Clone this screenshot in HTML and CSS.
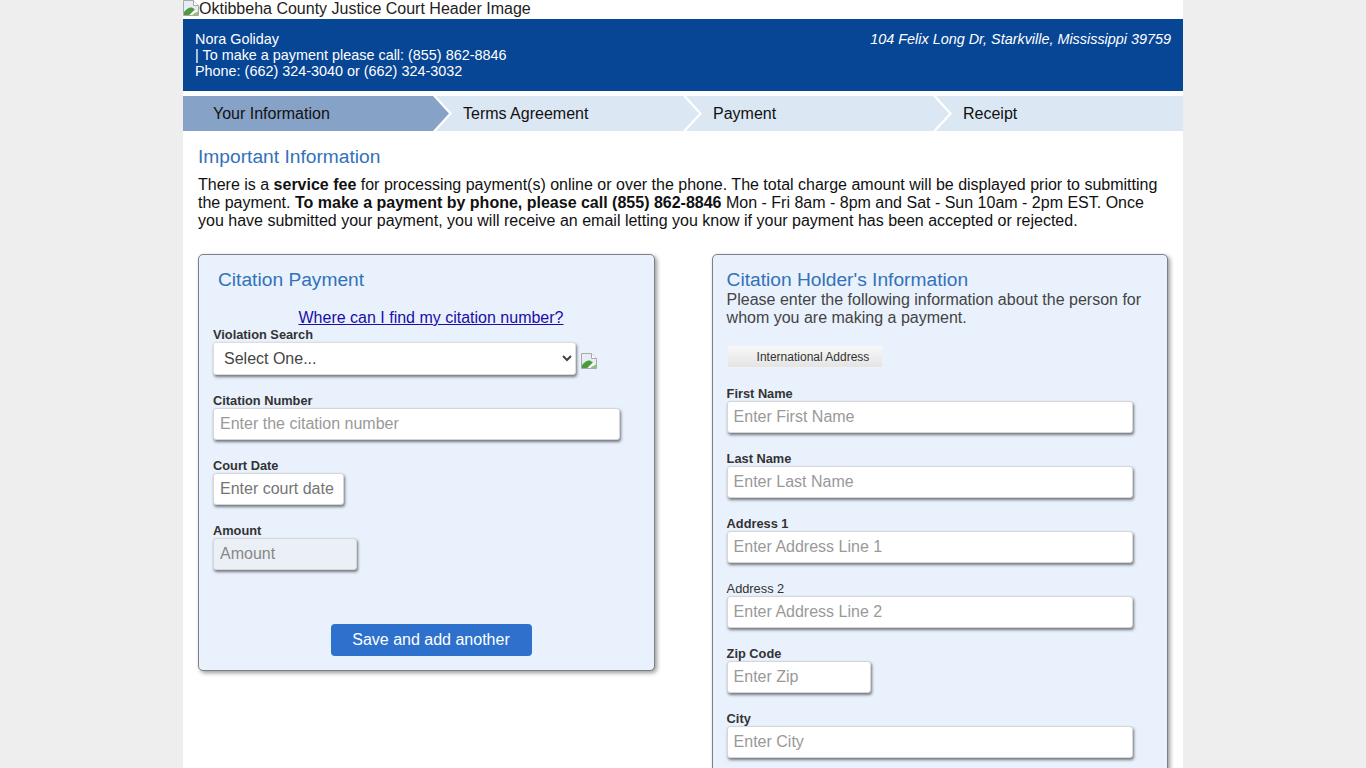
FILE: index.html
```html
<!DOCTYPE html>
<html lang="en">
<head>
<meta charset="utf-8">
<title>Oktibbeha County Justice Court</title>
<link rel="stylesheet" href="styles.css">
</head>
<body>
<div class="page">
  <div class="banner"><svg class="broken" viewBox="0 0 16 16"><path d="M.5 .5H10.5L15.5 5.5V15.5H.5Z" fill="#e6edf6" stroke="#a9a9a9"/><path d="M10.5 .5V5.5H15.5" fill="#fff" stroke="#a9a9a9"/><path d="M1 15V12C3.5 9 6 7 9 7.5L12 9.5 6.5 15Z" fill="#4f9a3f"/><path d="M6.5 15L12 9.5 15 11V15Z" fill="#f4f7f2"/><path d="M11 13.5L15 11.5V15H9.5Z" fill="#8fc07f"/></svg>Oktibbeha County Justice Court Header Image</div>
  <header class="court">
    <div>Nora Goliday<br>| To make a payment please call: (855) 862-8846<br>Phone: (662) 324-3040 or (662) 324-3032</div>
    <div class="address">104 Felix Long Dr, Starkville, Mississippi 39759</div>
  </header>
  <nav class="steps">
    <div class="step active">Your Information</div>
    <div class="step">Terms Agreement</div>
    <div class="step">Payment</div>
    <div class="step last">Receipt</div>
  </nav>
  <main class="content">
    <h2 class="intro-title">Important Information</h2>
    <p class="intro">There is a <b>service fee</b> for processing payment(s) online or over the phone. The total charge amount will be displayed prior to submitting the payment. <b>To make a payment by phone, please call (855) 862-8846</b> Mon - Fri 8am - 8pm and Sat - Sun 10am - 2pm EST. Once you have submitted your payment, you will receive an email letting you know if your payment has been accepted or rejected.</p>
    <div class="columns">
      <section class="panel left">
        <h2 class="panel-title indented">Citation Payment</h2>
        <a class="help" href="#">Where can I find my citation number?</a>
        <label class="field first">Violation Search</label>
        <div class="select-row">
          <select class="select"><option>Select One...</option></select>
          <svg class="broken small" viewBox="0 0 16 16"><path d="M.5 .5H10.5L15.5 5.5V15.5H.5Z" fill="#e6edf6" stroke="#a9a9a9"/><path d="M10.5 .5V5.5H15.5" fill="#fff" stroke="#a9a9a9"/><path d="M1 15V12C3.5 9 6 7 9 7.5L12 9.5 6.5 15Z" fill="#4f9a3f"/><path d="M6.5 15L12 9.5 15 11V15Z" fill="#f4f7f2"/><path d="M11 13.5L15 11.5V15H9.5Z" fill="#8fc07f"/></svg>
        </div>
        <label class="field">Citation Number</label>
        <input class="input w-citation" placeholder="Enter the citation number">
        <label class="field">Court Date</label>
        <input class="input w-date dark" placeholder="Enter court date">
        <label class="field">Amount</label>
        <input class="input w-amount disabled" placeholder="Amount" disabled>
        <div class="actions"><button class="save">Save and add another</button></div>
      </section>
      <section class="panel right">
        <h2 class="panel-title">Citation Holder's Information</h2>
        <p class="panel-note">Please enter the following information about the person for whom you are making a payment.</p>
        <div class="toggle">International Address</div>
        <label class="field">First Name</label>
        <input class="input w-full" placeholder="Enter First Name">
        <label class="field">Last Name</label>
        <input class="input w-full" placeholder="Enter Last Name">
        <label class="field">Address 1</label>
        <input class="input w-full" placeholder="Enter Address Line 1">
        <label class="field normal">Address 2</label>
        <input class="input w-full" placeholder="Enter Address Line 2">
        <label class="field">Zip Code</label>
        <input class="input w-zip" placeholder="Enter Zip">
        <label class="field">City</label>
        <input class="input w-full" placeholder="Enter City">
      </section>
    </div>
  </main>
</div>
</body>
</html>
```
FILE: styles.css
```css
html { overflow: hidden; height: 768px; }
* { box-sizing: border-box; }
body {
  margin: 0;
  background: #eeeeee;
  font-family: "Liberation Sans", Arial, sans-serif;
  color: #000;
}
.page { width: 1000px; margin: 0 auto; background: #fff; height: 768px; overflow: hidden; }
.banner { height: 19px; font-size: 16px; line-height: 18px; display: flex; align-items: flex-start; color: #222; }
.broken { width: 16px; height: 16px; flex: none; }
.court {
  height: 72px;
  background: #074595;
  color: #fff;
  font-size: 14.4px;
  line-height: 16px;
  padding: 12px 12px 0;
  display: flex;
  justify-content: space-between;
}
.address { font-style: italic; }
.steps { display: flex; margin-top: 5px; height: 35px; }
.step {
  width: 250px;
  position: relative;
  background: #dce7f4;
  font-size: 16px;
  line-height: 35px;
  padding-left: 30px;
  color: #111;
}
.step.active { background: #86a2c7; }
.step::before, .step::after {
  content: "";
  position: absolute;
  top: 0;
  height: 35px;
  left: 100%;
}
.step::before {
  width: 19px;
  background: #fff;
  clip-path: polygon(0 0, 3px 0, 19px 50%, 3px 100%, 0 100%);
  z-index: 1;
}
.step::after {
  width: 16px;
  background: #dce7f4;
  clip-path: polygon(0 0, 16px 50%, 0 100%);
  z-index: 2;
}
.step.active::after { background: #86a2c7; }
.step.last::before, .step.last::after { display: none; }
.content { padding: 0 15px; }
.intro-title { margin: 15px 0 0; font-size: 19.2px; line-height: 22px; font-weight: normal; color: #3371b8; }
.intro { margin: 8px 0 0; font-size: 16px; line-height: 18px; color: #111; }
.columns { display: flex; justify-content: space-between; align-items: flex-start; margin-top: 24px; }
.panel {
  width: 457px;
  background: #e9f1fc;
  border: 1px solid #7b8087;
  border-radius: 5px;
  box-shadow: 2px 2px 4px rgba(0,0,0,.4);
  padding: 14px 14px 0;
}
.panel.left { height: 417px; }
.panel.right { width: 456px; height: 600px; padding-left: 13.6px; }
.panel-title { margin: 0; font-size: 19.2px; line-height: 22px; font-weight: normal; color: #3371b8; }
.panel-title.indented { padding-left: 5px; }
.help {
  display: block;
  margin-top: 18px;
  width: 436px;
  text-align: center;
  font-size: 16px;
  line-height: 18px;
  color: #1a0dab;
}
.field { display: block; margin: 18px 0 -1px; font-size: 12.8px; line-height: 16px; font-weight: bold; color: #333; }
.field.first { margin-top: 0; }
.field.normal { font-weight: normal; }
.select-row { display: flex; align-items: center; gap: 5px; }
.select {
  width: 363px;
  height: 33px;
  border: 1px solid #ddd;
  border-radius: 3px;
  background: #fff;
  box-shadow: 1px 2px 3px rgba(0,0,0,.5);
  font-family: inherit;
  font-size: 16px;
  color: #444;
  padding-left: 6px;
}
.broken.small { margin-top: 4px; }
.input {
  display: block;
  height: 32px;
  border: 1px solid #d6d6d6;
  border-radius: 3px;
  background: #fff;
  box-shadow: 1px 2px 3px rgba(0,0,0,.5);
  font-family: inherit;
  font-size: 16px;
  padding: 0 6px;
  color: #333;
}
.input::placeholder { color: #999; opacity: 1; }
.input.dark::placeholder { color: #757575; }
.input.disabled { background: #ebf0f6; }
.input.disabled::placeholder { color: #888; }
.w-citation { width: 407px; }
.w-date { width: 131px; }
.w-amount { width: 144px; }
.w-full { width: 406px; }
.w-zip { width: 144px; }
.actions { margin-top: 54px; width: 436px; display: flex; justify-content: center; }
.save {
  width: 201px;
  height: 32px;
  border: none;
  border-radius: 4px;
  background: #2d71cd;
  color: #fff;
  font-family: inherit;
  font-size: 16px;
}
.panel-note { margin: 0; font-size: 16px; line-height: 18px; color: #444; }
.toggle {
  margin-top: 18px;
  width: 156px;
  height: 23px;
  padding-left: 29px;
  font-size: 12px;
  line-height: 23px;
  color: #333;
  background: linear-gradient(#f8f8f8, #e4e4e4);
  border: 1px solid #eef2f7;
}
```
